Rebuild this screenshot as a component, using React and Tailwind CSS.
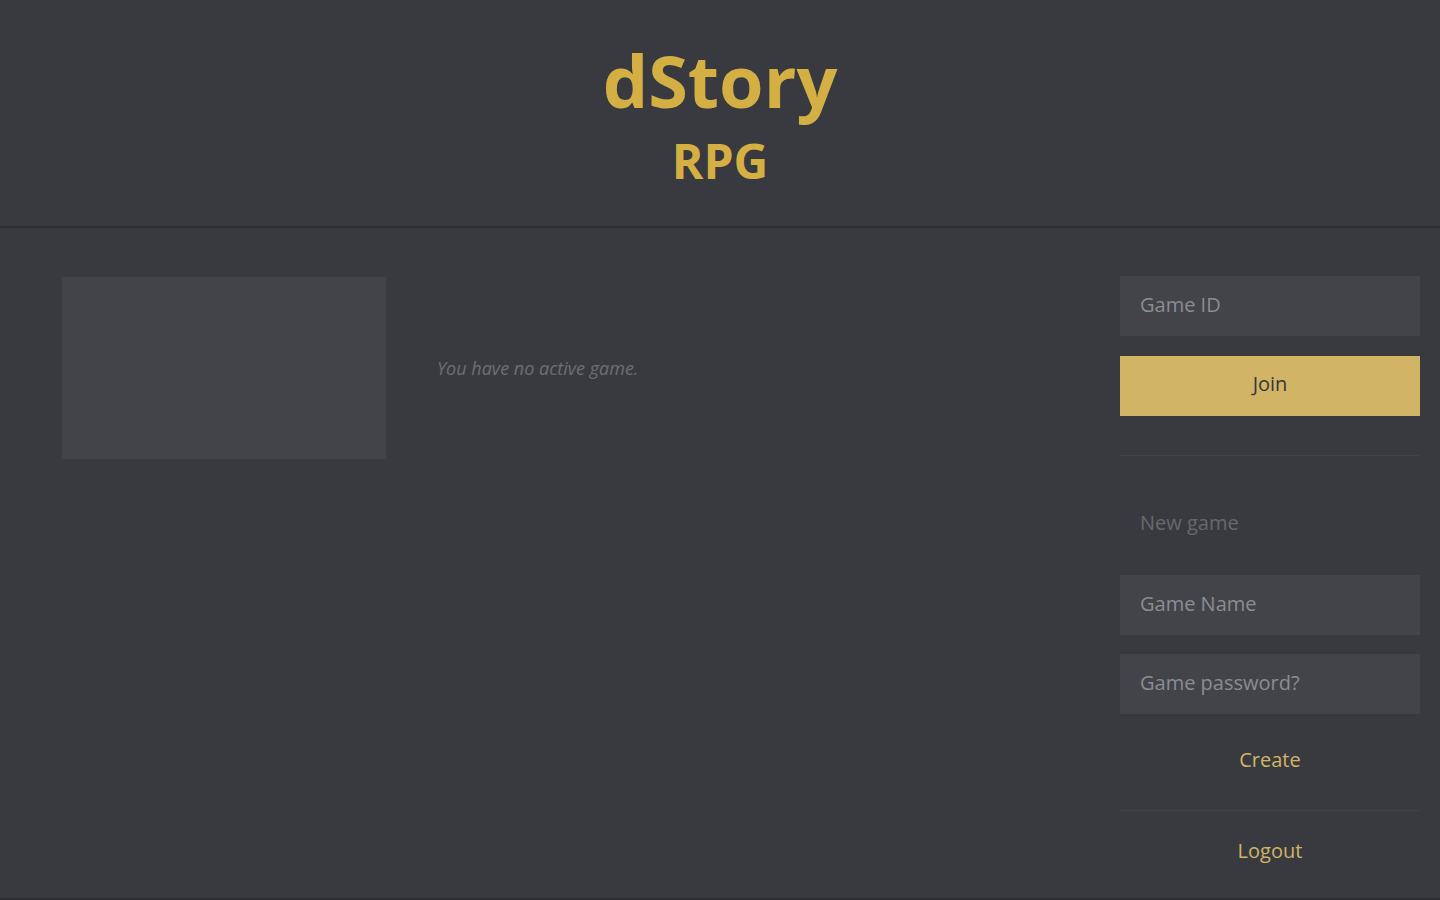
import React from "react";

const font = { fontFamily: '"Open Sans", "Noto Sans", sans-serif' };

function Field({ placeholder, className = "" }) {
  return (
    <input
      type="text"
      placeholder={placeholder}
      className={`block h-[60px] w-full bg-[#434449] px-5 pb-1 text-[20px] text-[#c9cacf] placeholder-[#8b8c91] outline-none ${className}`}
    />
  );
}

export default function App() {
  return (
    <div style={font} className="flex min-h-[900px] flex-col bg-[#393a40] border-b-2 border-[#2c2d32]">
      <header className="h-[228px] border-b-2 border-[#2f3035] flex flex-col items-center">
        <h1 className="mt-[32px] text-[72px] font-bold leading-[96px] text-[#d4af43]">dStory</h1>
        <h2 className="mt-[1px] text-[48px] font-bold leading-[64px] text-[#d4af43]">RPG</h2>
      </header>

      <main className="flex flex-1 pt-[49px]">
        <div className="flex flex-1 items-start pl-[62px]">
          <div className="h-[182px] w-[324px] bg-[#434449]" />
          <div className="flex h-[182px] items-center pl-[51px]">
            <p className="text-[18px] italic text-[#6d6e74]">You have no active game.</p>
          </div>
        </div>

        <aside className="-mt-px mr-[20px] w-[300px]">
          <Field placeholder="Game ID" />
          <button className="mt-5 block h-[60px] w-full bg-[#d1b466] pb-1 text-[20px] text-[#37383e]">Join</button>

          <div className="mt-[39px] border-t border-[#414248]" />

          <p className="pl-5 pt-[52px] pb-[37px] text-[20px] leading-[30px] text-[#67686e]">New game</p>
          <Field placeholder="Game Name" />
          <Field placeholder="Game password?" className="mt-[19px]" />
          <div className="flex h-[96px] items-center justify-center pb-[4px]">
            <button className="text-[20px] text-[#d1b466]">Create</button>
          </div>

          <div className="border-t border-[#414248]" />
          <div className="flex h-[79px] items-center justify-center">
            <button className="text-[20px] text-[#d1b466]">Logout</button>
          </div>
        </aside>
      </main>
    </div>
  );
}
